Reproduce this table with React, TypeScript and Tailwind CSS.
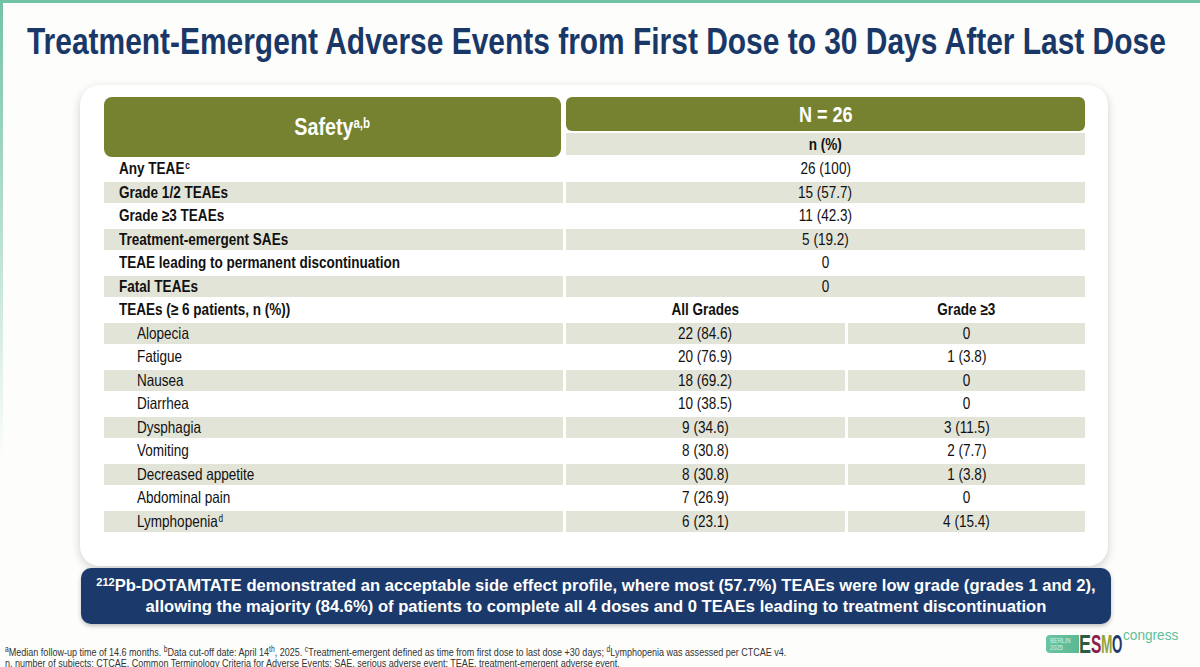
import type { ReactNode } from 'react'

const top = [
  { label: 'Any TEAE', sup: 'c', value: '26 (100)' },
  { label: 'Grade 1/2 TEAEs', value: '15 (57.7)' },
  { label: 'Grade ≥3 TEAEs', value: '11 (42.3)' },
  { label: 'Treatment-emergent SAEs', value: '5 (19.2)' },
  { label: 'TEAE leading to permanent discontinuation', value: '0' },
  { label: 'Fatal TEAEs', value: '0' },
]

const events = [
  { label: 'Alopecia', all: '22 (84.6)', g3: '0' },
  { label: 'Fatigue', all: '20 (76.9)', g3: '1 (3.8)' },
  { label: 'Nausea', all: '18 (69.2)', g3: '0' },
  { label: 'Diarrhea', all: '10 (38.5)', g3: '0' },
  { label: 'Dysphagia', all: '9 (34.6)', g3: '3 (11.5)' },
  { label: 'Vomiting', all: '8 (30.8)', g3: '2 (7.7)' },
  { label: 'Decreased appetite', all: '8 (30.8)', g3: '1 (3.8)' },
  { label: 'Abdominal pain', all: '7 (26.9)', g3: '0' },
  { label: 'Lymphopenia', sup: 'd', all: '6 (23.1)', g3: '4 (15.4)' },
]

// Arial Narrow look: Liberation Sans squeezed horizontally
const Narrow = ({ children, left }: { children: ReactNode; left?: boolean }) => (
  <span className={`inline-block scale-x-[0.82] whitespace-nowrap ${left ? 'origin-left' : 'origin-center'}`}>
    {children}
  </span>
)

const shade = (i: number) => (i % 2 === 1 ? 'bg-[#e3e4d8]' : 'bg-transparent')

const TopRow = ({ i, label, sup, value }: { i: number; label: string; sup?: string; value: string }) => (
  <div className="flex h-[23.5px] gap-[3px] py-px">
    <div className={`flex w-[459px] items-center pl-[15px] font-bold ${shade(i)}`}>
      <Narrow left>
        {label}
        {sup && <sup className="ml-px text-[10px]">{sup}</sup>}
      </Narrow>
    </div>
    <div className={`flex flex-1 items-center justify-center ${shade(i)}`}>
      <Narrow>{value}</Narrow>
    </div>
  </div>
)

const EventRow = ({ i, label, sup, all, g3 }: { i: number; label: string; sup?: string; all: string; g3: string }) => (
  <div className="flex h-[23.5px] gap-[3px] py-px">
    <div className={`flex w-[459px] items-center pl-[33px] ${shade(i)}`}>
      <Narrow left>
        {label}
        {sup && <sup className="ml-px text-[10px]">{sup}</sup>}
      </Narrow>
    </div>
    <div className={`flex w-[279px] items-center justify-center ${shade(i)}`}>
      <Narrow>{all}</Narrow>
    </div>
    <div className={`flex flex-1 items-center justify-center ${shade(i)}`}>
      <Narrow>{g3}</Narrow>
    </div>
  </div>
)

const EsmoLogo = () => (
  <div className="absolute left-[1046px] top-[628px] flex items-start">
    <div className="mt-[7px] flex h-[18px] w-[33px] flex-col justify-center rounded-l-[4px] bg-gradient-to-r from-[#6cc4a0] to-[#5bb993] pl-[4px] text-[7px] leading-[7px] text-[#d9f1e6]">
      <Narrow left>BERLIN</Narrow>
      <Narrow left>2025</Narrow>
    </div>
    <div className="mt-[7px] flex h-[18px] items-center overflow-visible text-[25px] font-bold leading-none">
      <span className="block w-[12px]">
        <span className="inline-block origin-left scale-x-[0.72] text-[#2c5c3d]">E</span>
      </span>
      <span className="block w-[10px]">
        <span className="inline-block origin-left scale-x-[0.62] text-[#8d1d4f]">S</span>
      </span>
      <span className="block w-[11px]">
        <span className="inline-block origin-left scale-x-[0.55] text-[#93a33c]">M</span>
      </span>
      <span className="block w-[10px]">
        <span className="inline-block origin-left scale-x-[0.53] text-[#1c3a6b]">O</span>
      </span>
    </div>
    <span className="ml-[1px] text-[15.5px] leading-[14px] text-[#5fbf98]">
      <span className="inline-block origin-left scale-x-[0.88] whitespace-nowrap">congress</span>
    </span>
  </div>
)

export default function App() {
  return (
    <div className="relative h-[667px] w-[1200px] overflow-hidden bg-[#fdfdfc] [font-family:'Liberation_Sans',Arial,sans-serif] text-[#111]">
      {/* teal frame */}
      <div className="absolute inset-x-0 top-0 h-[3px] bg-[#72c2a6]" />
      <div className="absolute left-0 top-0 h-[460px] w-[3px] bg-gradient-to-b from-[#72c2a6] to-transparent" />

      <h1 className="flex justify-center pr-[8px] pt-[21px] text-[36.5px] font-bold leading-[42px] text-[#1a3867]">
        <Narrow>Treatment-Emergent Adverse Events from First Dose to 30 Days After Last Dose</Narrow>
      </h1>

      <div className="ml-[80px] mt-[22px] w-[1028px] rounded-[20px] bg-white pb-[33px] pl-[24px] pr-[23px] pt-[12px] text-[16.5px] shadow-[0_3px_10px_rgba(0,0,0,0.18)]">
        {/* header */}
        <div className="flex gap-[5px]">
          <div className="flex h-[60px] w-[457px] items-center justify-center rounded-[8px] bg-[#76822f] text-[24px] font-bold text-white">
            <Narrow>
              Safety<sup className="text-[14px]">a,b</sup>
            </Narrow>
          </div>
          <div className="flex flex-1 flex-col">
            <div className="flex h-[34px] items-center justify-center rounded-[6px] bg-[#76822f] text-[22px] font-bold text-white">
              <Narrow>N = 26</Narrow>
            </div>
            <div className="mt-[2px] flex h-[22px] items-center justify-center bg-[#e3e4d8] font-bold">
              <Narrow>n (%)</Narrow>
            </div>
          </div>
        </div>

        {top.map((r, i) => (
          <TopRow key={r.label} i={i} {...r} />
        ))}
        <div className="flex h-[23.5px] gap-[3px] py-px font-bold">
          <div className="flex w-[459px] items-center pl-[15px]">
            <Narrow left>TEAEs (≥ 6 patients, n (%))</Narrow>
          </div>
          <div className="flex w-[279px] items-center justify-center">
            <Narrow>All Grades</Narrow>
          </div>
          <div className="flex flex-1 items-center justify-center">
            <Narrow>Grade ≥3</Narrow>
          </div>
        </div>
        {events.map((r, i) => (
          <EventRow key={r.label} i={i + 7} {...r} />
        ))}
      </div>

      <div className="ml-[81px] mt-[2px] flex h-[56px] w-[1030px] flex-col items-center justify-center rounded-[10px] bg-[#1b3a6b] text-[16.6px] font-bold leading-[21px] text-white shadow-[0_2px_4px_rgba(0,0,0,0.25)]">
        <p className="whitespace-nowrap">
          <sup className="text-[11px]">212</sup>Pb-DOTAMTATE demonstrated an acceptable side effect profile, where most (57.7%) TEAEs were low grade (grades 1 and 2),
        </p>
        <p className="whitespace-nowrap">allowing the majority (84.6%) of patients to complete all 4 doses and 0 TEAEs leading to treatment discontinuation</p>
      </div>

      <div className="mt-[19px] flex flex-col pl-[5px] pt-[4px] text-[11px] leading-[11px] text-[#333]">
        <Narrow left>
          <sup>a</sup>Median follow-up time of 14.6 months. <sup>b</sup>Data cut-off date: April 14<sup>th</sup>, 2025.{' '}
          <sup>c</sup>Treatment-emergent defined as time from first dose to last dose +30 days; <sup>d</sup>Lymphopenia was assessed per CTCAE v4.
        </Narrow>
        <Narrow left>
          n, number of subjects; CTCAE, Common Terminology Criteria for Adverse Events; SAE, serious adverse event; TEAE, treatment-emergent adverse event.
        </Narrow>
      </div>

      <EsmoLogo />
    </div>
  )
}
